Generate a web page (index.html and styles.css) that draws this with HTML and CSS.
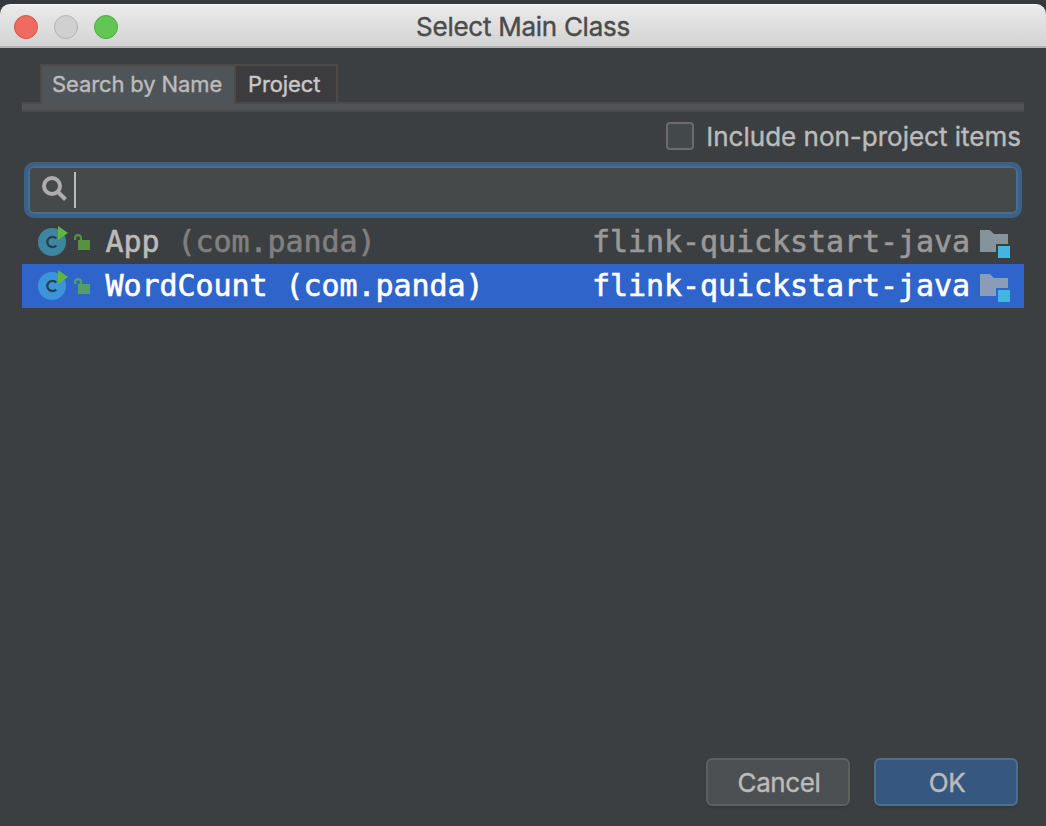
FILE: index.html
```
<!DOCTYPE html>
<html lang="en">
<head>
<meta charset="utf-8">
<title>Select Main Class</title>
<link rel="stylesheet" href="styles.css">
</head>
<body>
<svg class="defs" aria-hidden="true">
  <symbol id="lock" viewBox="0 0 16 16">
    <path d="M4 6h12v10H4z"/>
    <path d="M1.1 6V3.8Q1.1 1.1 4 1.1T6.9 3.8V6" fill="none" stroke="currentColor" stroke-width="2.2"/>
  </symbol>
  <symbol id="module" viewBox="0 0 30 28">
    <path d="M0 0h9q1 0 2 1l3 3h14v10H16v8H0z"/>
    <path d="M18 16h12v12H18z" fill="#40b6e0"/>
  </symbol>
  <symbol id="class" viewBox="0 0 30 30">
    <circle cx="14" cy="16" r="14"/>
    <path d="M18.2 12.6a5.1 5.1 0 1 0 0 6.8" fill="none" stroke="#26414b" stroke-width="2.3"/>
    <path d="M20 0l10 7-10 7z" fill="#62b543"/>
  </symbol>
</svg>
<main class="dialog">
  <header class="titlebar">
    <div class="lights"><i class="light close"></i><i class="light minimize"></i><i class="light expand"></i></div>
    <h1 class="title">Select Main Class</h1>
  </header>
  <section class="content">
    <nav class="tabs">
      <div class="tab active"><span>Search by Name</span></div>
      <div class="tab"><span>Project</span></div>
    </nav>
    <div class="strip"></div>
    <label class="option"><i class="checkbox"></i><span>Include non-project items</span></label>
    <div class="search">
      <svg class="magnifier" viewBox="0 0 26 26"><circle cx="10" cy="10" r="8" fill="none" stroke="#adadad" stroke-width="4"/><path d="M15 15l8.5 8.5" stroke="#adadad" stroke-width="4"/></svg>
      <i class="caret"></i>
    </div>
    <ul class="results">
      <li class="row">
        <svg class="class-icon"><use href="#class"/></svg>
        <svg class="lock"><use href="#lock"/></svg>
        <span class="name">App <span class="package">(com.panda)</span></span>
        <span class="module">flink-quickstart-java</span>
        <svg class="folder"><use href="#module"/></svg>
      </li>
      <li class="row selected">
        <svg class="class-icon"><use href="#class"/></svg>
        <svg class="lock"><use href="#lock"/></svg>
        <span class="name">WordCount <span class="package">(com.panda)</span></span>
        <span class="module">flink-quickstart-java</span>
        <svg class="folder"><use href="#module"/></svg>
      </li>
    </ul>
    <footer class="actions">
      <button class="button"><span>Cancel</span></button>
      <button class="button primary"><span>OK</span></button>
    </footer>
  </section>
</main>
</body>
</html>
```
FILE: styles.css
```
* { box-sizing: border-box; }
body {
  margin: 0;
  background: #35383c;
  font-family: Inter, "Liberation Sans", sans-serif;
  color: #bbb;
  -webkit-text-stroke: 0.4px;
}
.defs { position: absolute; width: 0; height: 0; }
.dialog {
  width: 1046px;
  height: 826px;
  padding-top: 4px;
  display: flex;
  flex-direction: column;
}
.titlebar {
  height: 44px;
  flex: none;
  display: grid;
  grid-template-columns: 1fr auto 1fr;
  align-items: center;
  border-radius: 10px 10px 0 0;
  border-top: 1px solid #f8f8f8;
  border-bottom: 2px solid #b2b4b3;
  background: linear-gradient(#ebebeb, #d3d3d3);
}
.lights { display: flex; gap: 16px; padding-left: 14px; margin-top: 2px; }
.light { width: 24px; height: 24px; border-radius: 50%; border: 1px solid; }
.close { background: #ed6b5f; border-color: #d9534a; }
.minimize { background: #d0d0d0; border-color: #b4b4b4; }
.expand { background: #62c655; border-color: #4fab41; }
.title {
  margin: 3px 0 0;
  font-size: 26px;
  line-height: 32px;
  font-weight: 400;
  letter-spacing: -0.27px;
  color: #4b4b4b;
  white-space: nowrap;
}
.content {
  flex: 1;
  display: flex;
  flex-direction: column;
  padding: 16px 22px 20px;
  background: #3c3f41;
}
.tabs { display: flex; height: 38px; padding-left: 18px; }
.tab {
  width: 104px;
  height: 38px;
  padding: 1px 0 0 12px;
  border: 2px solid #4b4a49;
  border-bottom: 0;
  background: #3c3c3e;
  font-size: 22px;
  line-height: 34px;
  letter-spacing: -0.12px;
  white-space: nowrap;
  color: #c8c8c8;
}
.active {
  width: 194px;
  height: 40px;
  padding-left: 10px;
  border-right: 0;
  background: #4e5457;
  color: #bbb;
  position: relative;
}
.strip {
  height: 10px;
  flex: none;
  border: solid #4b4a49;
  border-width: 2px 0;
  background: #4e5457;
}
.option {
  height: 50px;
  display: flex;
  align-items: center;
  justify-content: flex-end;
  gap: 12px;
  padding-right: 3px;
  padding-bottom: 2px;
  font-size: 26px;
  white-space: nowrap;
}
.checkbox {
  width: 28px;
  height: 28px;
  border: 2px solid #6b6b6b;
  border-radius: 4px;
  background: #43494a;
}
.search {
  height: 56px;
  margin: 0 2px;
  display: flex;
  align-items: center;
  padding: 0 12px;
  border: 4px solid #3d6185;
  border-radius: 10px;
  box-shadow: inset 0 0 0 2px #466d94;
  background: #45494a;
}
.magnifier { width: 26px; height: 26px; margin: -2px 6px 0 2px; }
.caret { width: 2px; height: 36px; background: #bbb; }
.results { list-style: none; margin: 2px 0 0; padding: 0; }
.row {
  height: 44px;
  display: flex;
  align-items: center;
  padding: 0 14px 0 16px;
  font: 30px/44px "DejaVu Sans Mono", monospace;
  letter-spacing: -0.06px;
  white-space: nowrap;
  fill: #87939a;
  -webkit-text-stroke: 0.6px;
}
.class-icon { width: 30px; height: 30px; margin-top: -2px; fill: #3e86a0; }
.lock { width: 16px; height: 16px; margin: 0 16px 0 6px; fill: #59913f; color: #59913f; }
.name { margin-left: -0.5px; }
.package { color: #808080; }
.module { margin-left: auto; color: #999; }
.folder { width: 30px; height: 28px; margin: 4px 0 0 10px; }
.selected { background: #2f65ca; color: #fff; fill: #8b9cb9; }
.selected .class-icon { fill: #3c95db; }
.selected .lock { fill: #539e66; color: #539e66; }
.selected .package, .selected .module { color: #fff; }
.actions { margin-top: auto; display: flex; justify-content: flex-end; gap: 24px; padding-right: 6px; }
.button {
  width: 144px;
  height: 48px;
  padding: 0 0 0 2px;
  border: 2px solid #5e6060;
  border-radius: 6px;
  background: #4c5052;
  box-shadow: 0 2px 2px #36393b;
  font: 26px Inter, sans-serif;
  letter-spacing: -0.4px;
  color: #bbb;
  -webkit-text-stroke: 0.4px;
}
.primary { background: #365880; border-color: #4c708c; }
```
